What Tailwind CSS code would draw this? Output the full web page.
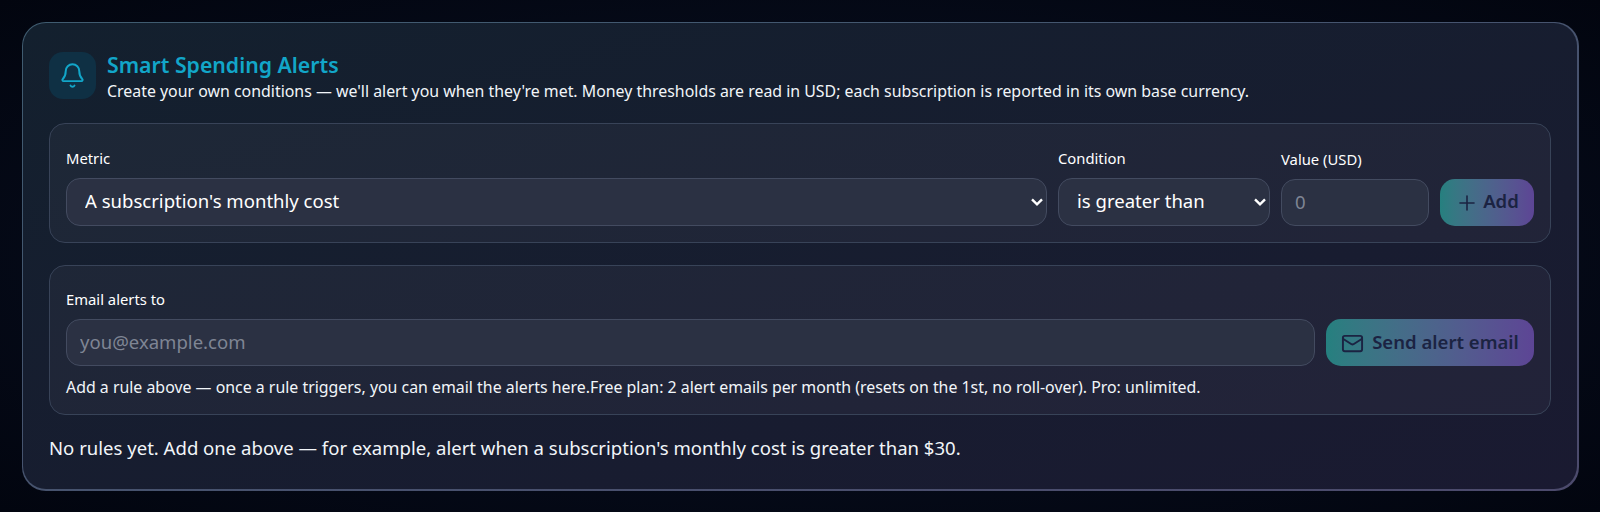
<!DOCTYPE html>
<html lang="en">
<head>
    <meta charset="UTF-8">
    <meta name="viewport" content="width=device-width, initial-scale=1.0">
    <title>Smart Spending Alerts</title>
    <script src="https://cdn.jsdelivr.net/npm/@tailwindcss/browser@4"></script>
</head>
<body class="h-[512px] overflow-hidden bg-[radial-gradient(ellipse_at_center,#0a1224_0%,#050a18_60%,#02050f_100%)] p-[21.5px] font-['Noto_Sans',sans-serif] text-white">
<!-- card -->
<div class="h-[469px] rounded-[24px] bg-gradient-to-br from-[#3f5c70] to-[#4c4a6c] p-[1.5px]">
<section class="h-full rounded-[23px] bg-gradient-to-br from-[#13202e] to-[#1a1a31] px-[26px] pt-[29px]">
    <!-- header -->
    <div class="flex h-[47px] items-start gap-[11px]">
        <div class="flex h-[47px] w-[47px] shrink-0 items-center justify-center rounded-[14px] bg-[#0f3044]">
            <svg class="h-[27px] w-[27px] text-[#12a6c9]" viewBox="0 0 24 24" fill="none" stroke="currentColor" stroke-width="1.75" stroke-linecap="round" stroke-linejoin="round">
                <path d="M10.268 21a2 2 0 0 0 3.464 0"/>
                <path d="M3.262 15.326A1 1 0 0 0 4 17h16a1 1 0 0 0 .74-1.673C19.41 13.956 18 12.499 18 8A6 6 0 0 0 6 8c0 4.499-1.411 5.956-2.738 7.326"/>
            </svg>
        </div>
        <div>
            <h2 class="text-[21.25px] font-semibold leading-[26px] text-[#12a6c9]">Smart Spending Alerts</h2>
            <p class="text-[15.9px] leading-[27px] text-[#f1f5f9]">Create your own conditions — we'll alert you when they're met. Money thresholds are read in USD; each subscription is reported in its own base currency.</p>
        </div>
    </div>

    <!-- rule form -->
    <div class="mt-[24px] flex h-[120px] items-end gap-[11px] rounded-[16px] border border-[#384358] bg-white/[0.04] px-4 pb-4">
        <label class="flex-1">
            <span class="mb-[10px] block text-[14.8px] leading-5">Metric</span>
            <span class="relative block">
                <select class="h-[48.5px] w-full appearance-none rounded-[14px] border border-[#434b60] bg-[#2b3143] pb-[2px] pl-[18px] pr-1 text-[18.56px]">
                    <option>A subscription's monthly cost</option>
                </select>
                <svg class="pointer-events-none absolute right-[4px] top-1/2 h-[8px] w-[12px] -translate-y-1/2" viewBox="0 0 12 8" fill="none" stroke="currentColor" stroke-width="2.4"><path d="M1 1.3 6 6.3l5-5"/></svg>
            </span>
        </label>
        <label class="w-[212px]">
            <span class="mb-[10px] block text-[14.8px] leading-5">Condition</span>
            <span class="relative block">
                <select class="h-[48.5px] w-full appearance-none rounded-[14px] border border-[#434b60] bg-[#2b3143] pb-[2px] pl-[18px] pr-1 text-[18.56px]">
                    <option>is greater than</option>
                </select>
                <svg class="pointer-events-none absolute right-[4px] top-1/2 h-[8px] w-[12px] -translate-y-1/2" viewBox="0 0 12 8" fill="none" stroke="currentColor" stroke-width="2.4"><path d="M1 1.3 6 6.3l5-5"/></svg>
            </span>
        </label>
        <label class="w-[148px]">
            <span class="mb-[10px] block text-[14.8px] leading-5">Value (USD)</span>
            <input class="h-[47px] w-full rounded-[14px] border border-[#434b60] bg-[#2b3143] px-[13px] pb-[2px] text-[18.56px] placeholder:text-[#7f8594]" placeholder="0">
        </label>
        <button class="flex h-[47.5px] w-[94px] items-center justify-center gap-[4px] rounded-[15px] bg-gradient-to-r from-[#25807f] to-[#5d4595] pb-[2px] text-[18.56px] font-semibold text-[#1b2342]">
            <svg class="h-[24px] w-[24px] translate-y-[2px]" viewBox="0 0 24 24" fill="none" stroke="currentColor" stroke-width="1.6" stroke-linecap="round" stroke-linejoin="round"><path d="M5 12h14"/><path d="M12 5v14"/></svg>
            Add
        </button>
    </div>

    <!-- email -->
    <div class="mt-[22px] h-[150px] rounded-[16px] border border-[#384358] bg-white/[0.04] px-4 pt-[23px]">
        <label class="mb-[10px] block text-[14.8px] leading-5">Email alerts to</label>
        <div class="flex gap-[11px]">
            <input class="h-[47px] flex-1 rounded-[14px] border border-[#434b60] bg-[#2b3143] px-[13px] pb-[2px] text-[18.56px] placeholder:text-[#7f8594]" placeholder="you@example.com">
            <button class="flex h-[47px] w-[208px] items-center justify-center gap-[8px] rounded-[15px] bg-gradient-to-r from-[#25807f] to-[#5d4595] pb-[2px] text-[18.56px] font-semibold text-[#1b2342]">
                <svg class="h-[23px] w-[23px] translate-y-[2px]" viewBox="0 0 24 24" fill="none" stroke="currentColor" stroke-width="2" stroke-linecap="round" stroke-linejoin="round"><path d="m22 7-8.991 5.727a2 2 0 0 1-2.009 0L2 7"/><rect x="2" y="4" width="20" height="16" rx="2"/></svg>
                Send alert email
            </button>
        </div>
        <p class="mt-[9px] text-[15.9px] leading-6 text-[#f1f5f9]">Add a rule above — once a rule triggers, you can email the alerts here.Free plan: 2 alert emails per month (resets on the 1st, no roll-over). Pro: unlimited.</p>
    </div>

    <p class="mt-[19px] text-[18.56px] leading-[28px] text-[#f1f5f9]">No rules yet. Add one above — for example, alert when a subscription's monthly cost is greater than $30.</p>
</section>
</div>
</body>
</html>
